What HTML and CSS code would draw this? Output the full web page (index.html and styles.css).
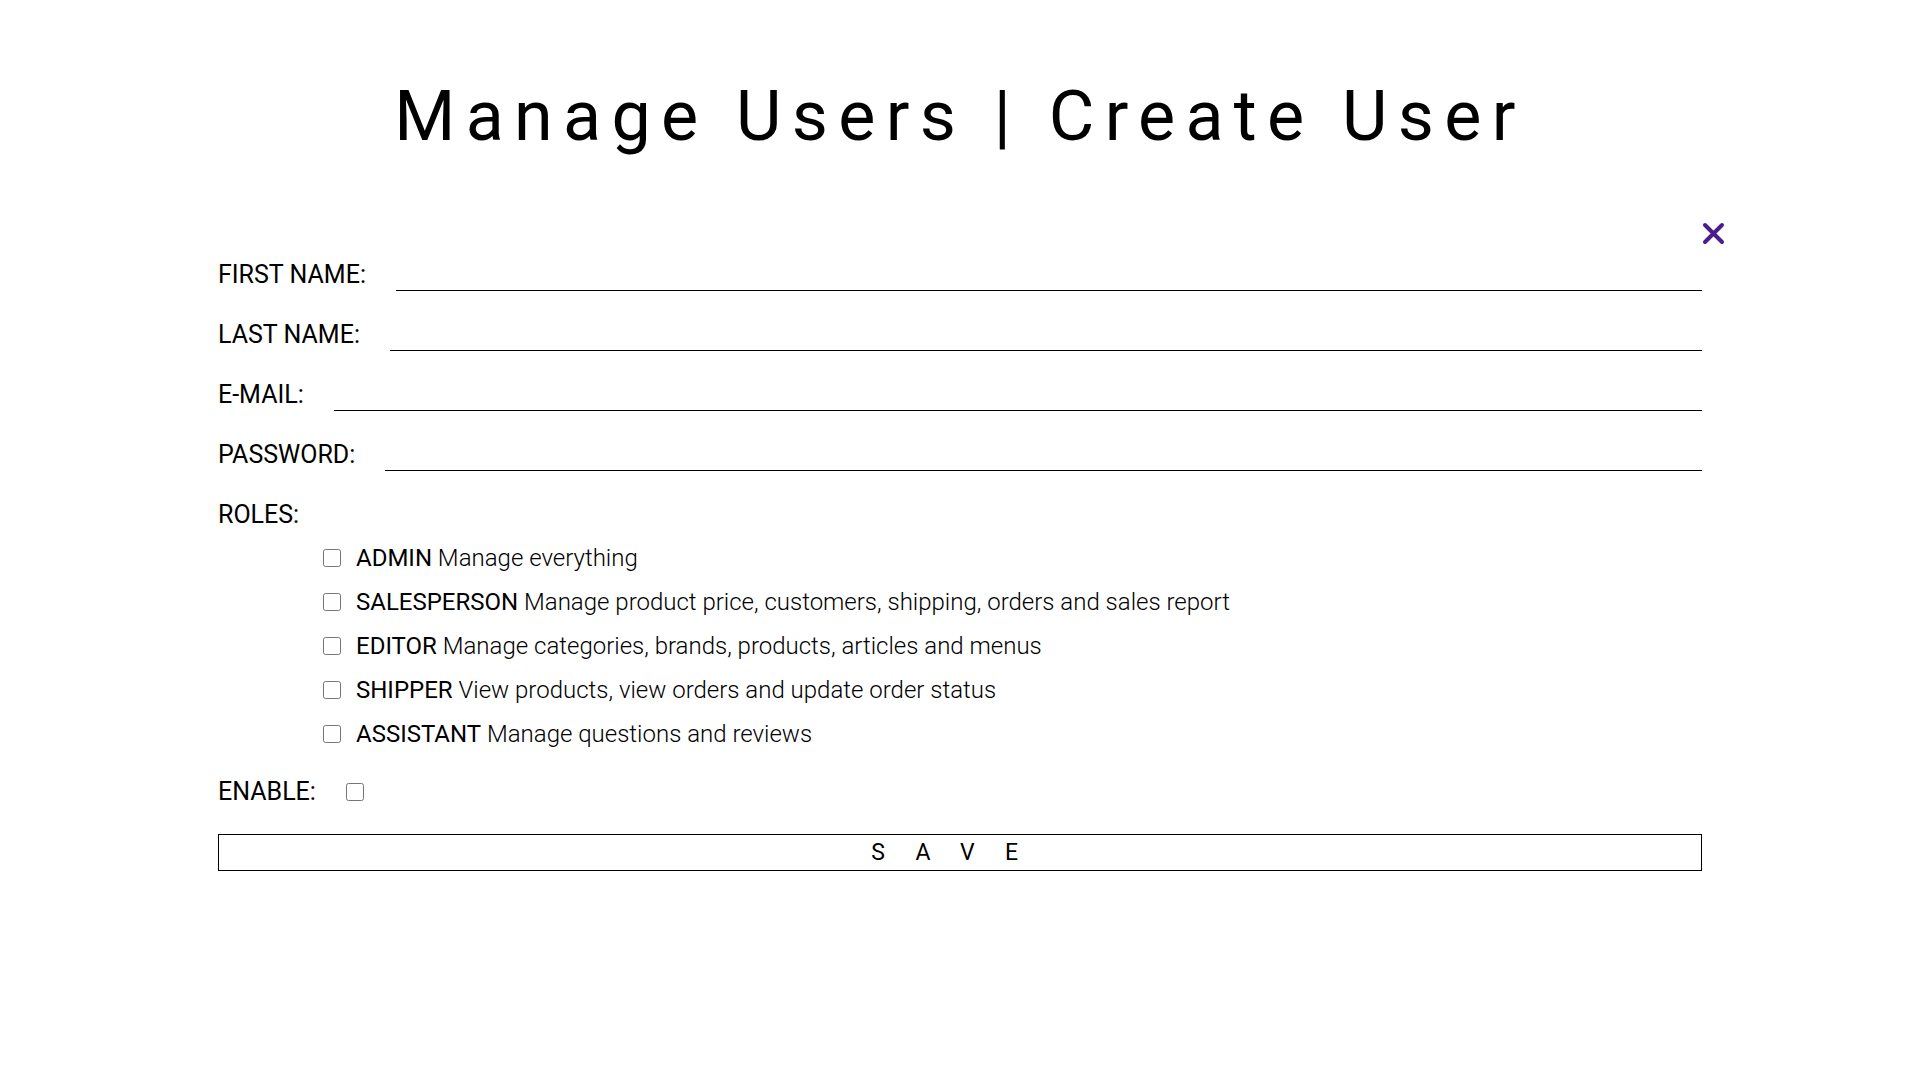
FILE: index.html
```html
<!DOCTYPE html>
<html lang="en">
<head>
  <meta charset="UTF-8">
  <title>Manage Users | Create User</title>
  <link rel="stylesheet" href="styles.css">
</head>
<body>
  <h1>Manage Users | Create User</h1>

  <div class="formulario">
    <a class="cerrar" href="#" title="Close">
      <svg width="23" height="23" viewBox="0 0 23 23">
        <path d="M3 3 L20 20 M20 3 L3 20" stroke="#4b1c8f" stroke-width="4" stroke-linecap="round" fill="none"/>
      </svg>
    </a>

    <div class="fila">
      <label for="first_name">FIRST NAME:</label>
      <input id="first_name" type="text" />
    </div>
    <div class="fila">
      <label for="last_name">LAST NAME:</label>
      <input id="last_name" type="text" />
    </div>
    <div class="fila">
      <label for="email">E-MAIL:</label>
      <input id="email" type="email" />
    </div>
    <div class="fila">
      <label for="password">PASSWORD:</label>
      <input id="password" type="password" />
    </div>
    <div class="fila">
      <label>ROLES:</label>
    </div>

    <div class="roles">
      <label class="rol"><input type="checkbox" /> <b>ADMIN</b> Manage everything</label>
      <label class="rol"><input type="checkbox" /> <b>SALESPERSON</b> Manage product price, customers, shipping, orders and sales report</label>
      <label class="rol"><input type="checkbox" /> <b>EDITOR</b> Manage categories, brands, products, articles and menus</label>
      <label class="rol"><input type="checkbox" /> <b>SHIPPER</b> View products, view orders and update order status</label>
      <label class="rol"><input type="checkbox" /> <b>ASSISTANT</b> Manage questions and reviews</label>
    </div>

    <div class="fila-enable">
      <label for="enabled">ENABLE:</label>
      <input id="enabled" type="checkbox" />
    </div>

    <button class="guardar">SAVE</button>
  </div>
</body>
</html>
```

FILE: styles.css
```css
body {
  font-family: 'Roboto', sans-serif;
  margin: 0;
  padding: 0;
  background-color: #fff;
  color: #000;
}

h1 {
  margin: 75px 0 0;
  font-size: 70px;
  font-weight: 400;
  line-height: 82px;
  letter-spacing: 10.3px;
  text-align: center;
}

.formulario {
  position: relative;
  width: 1484px;
  margin: 74px auto 0;
}

.cerrar {
  position: absolute;
  left: 100%;
  top: -9px;
  display: block;
  width: 23px;
  height: 23px;
}

.cerrar svg {
  display: block;
}

.fila {
  display: flex;
  align-items: flex-end;
  gap: 30px;
  height: 60px;
}

.fila label,
.fila-enable label {
  font-size: 25px;
  line-height: 28px;
  margin-bottom: 2px;
  white-space: nowrap;
}

.fila input {
  flex: 1;
  height: 30px;
  padding: 0 4px;
  border: none;
  border-bottom: 1px solid #000;
  font-family: 'Roboto', sans-serif;
  font-size: 20px;
  outline: none;
  box-sizing: border-box;
}

.roles {
  display: flex;
  flex-direction: column;
  margin: 5px 0 0 105px;
}

.rol {
  display: flex;
  align-items: center;
  height: 44px;
  font-size: 24px;
  font-weight: 300;
  white-space: pre;
}

.rol b {
  font-weight: 400;
}

input[type="checkbox"] {
  width: 18px;
  height: 18px;
  margin: 0;
}

.rol input[type="checkbox"] {
  margin-right: 15px;
}

.fila-enable {
  display: flex;
  align-items: center;
  gap: 30px;
  height: 44px;
  margin-top: 14px;
}

.fila-enable label {
  margin-bottom: 0;
}

.guardar {
  display: block;
  width: 100%;
  height: 37px;
  margin-top: 20px;
  padding: 0;
  background: #fff;
  border: 1px solid #000;
  font-family: 'Roboto', sans-serif;
  font-size: 23px;
  letter-spacing: 30.5px;
  color: #000;
  cursor: pointer;
}
```
